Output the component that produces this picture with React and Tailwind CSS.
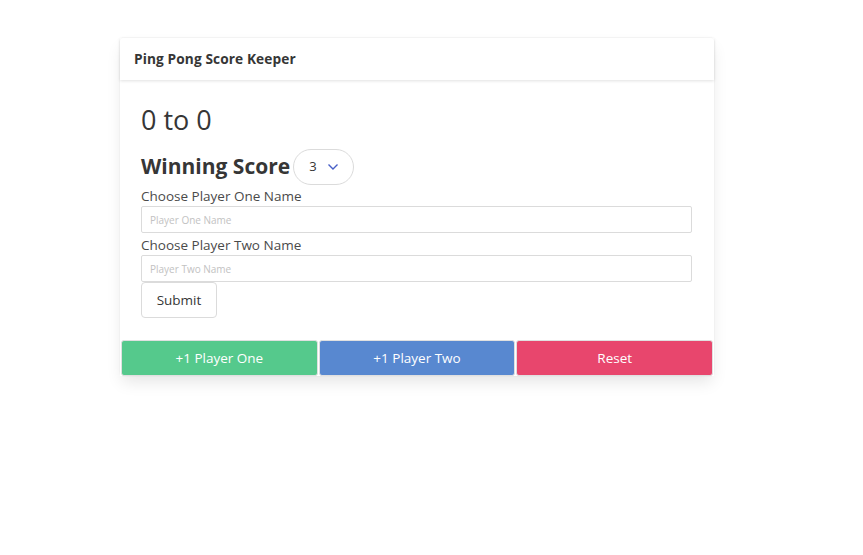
export default function App() {
  return (
    <div className="min-h-[555px] bg-white pt-[38px]" style={{ fontFamily: '"Open Sans", "Noto Sans", sans-serif' }}>
      <div className="ml-[120px] w-[594px] bg-white rounded shadow-[0_8px_16px_-2px_rgba(10,10,10,0.1),0_0_0_1px_rgba(10,10,10,0.02)]">
        <div className="h-[42px] flex items-center px-[14px] shadow-[0_1px_3px_rgba(10,10,10,0.12)]">
          <h1 className="text-[13.7px] font-bold text-[#363636] tracking-[0.1px]">Ping Pong Score Keeper</h1>
        </div>

        <div className="px-[21px] pt-[22px] pb-[22px] text-[#4a4a4a]">
          <h2 className="text-[27px] leading-[36px] text-[#363636]">0 to 0</h2>

          <div className="flex items-center mt-[11px]">
            <span className="text-[21px] font-bold text-[#363636]">Winning Score</span>
            <div className="ml-[3px] w-[61px] h-[36px] rounded-full border border-[#dbdbdb] flex items-center pl-[15px] gap-[10px]">
              <span className="text-[13px] text-[#363636]">3</span>
              <svg width="12" height="8" viewBox="0 0 12 8" fill="none" stroke="#485fc7" strokeWidth="1.4">
                <path d="M1.5 1.5 L6 6 L10.5 1.5" />
              </svg>
            </div>
          </div>

          <label className="block text-[13.5px] leading-[20px] mt-[1px]">Choose Player One Name</label>
          <input
            className="block w-[551px] h-[27px] border border-[#dbdbdb] rounded-[2px] px-[8px] text-[10px] placeholder:text-[#c2c2c2] outline-none"
            placeholder="Player One Name"
          />
          <label className="block text-[13.5px] leading-[20px] mt-[2px]">Choose Player Two Name</label>
          <input
            className="block w-[551px] h-[27px] border border-[#dbdbdb] rounded-[2px] px-[8px] text-[10px] placeholder:text-[#c2c2c2] outline-none"
            placeholder="Player Two Name"
          />
          <button className="w-[76px] h-[36px] border border-[#dbdbdb] rounded text-[13.5px] text-[#363636] bg-white">
            Submit
          </button>
        </div>

        <div className="flex gap-[1px] px-[1px] bg-white">
          <button className="flex-1 h-[36px] rounded-[3px] bg-[#55c98c] text-white text-[13.5px] border border-[#e0e0e0]">+1 Player One</button>
          <button className="flex-1 h-[36px] rounded-[3px] bg-[#5888d0] text-white text-[13.5px] border border-[#e0e0e0]">+1 Player Two</button>
          <button className="flex-1 h-[36px] rounded-[3px] bg-[#e8466d] text-white text-[13.5px] border border-[#e0e0e0]">Reset</button>
        </div>
      </div>
    </div>
  )
}
